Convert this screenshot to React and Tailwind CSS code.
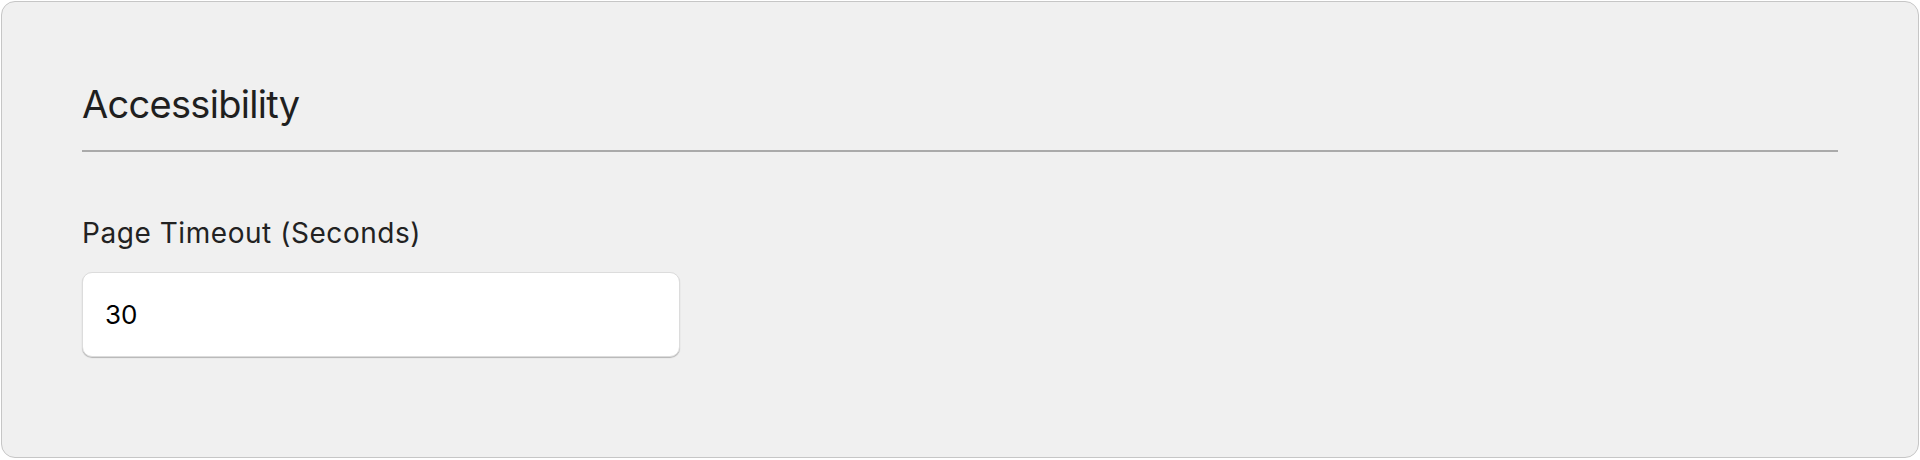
import React from "react";

const App = () => {
  return (
    <div className="w-[1920px] h-[460px] bg-white p-px" style={{ fontFamily: "Inter, 'Liberation Sans', sans-serif" }}>
      {/* CARD */}
      <div className="h-[457px] w-[1918px] rounded-[14px] border-[1.5px] border-[#c6c6c6] bg-[#f0f0f0] px-[80px] pt-[79px]">
        {/* SECTION HEADER */}
        <h2 className="text-[38px] leading-[46px] text-[#1f1f1f] font-normal tracking-[-0.7px]">
          Accessibility
        </h2>
        <div className="mt-[23px] h-[2px] bg-[#aaaaaa]"></div>

        {/* FIELD */}
        <label className="mt-[65px] block text-[28px] leading-[32px] tracking-[0.55px] text-[#222222]">
          Page Timeout (Seconds)
        </label>
        <input
          type="text"
          defaultValue="30"
          className="mt-[23px] block h-[85px] w-[598px] rounded-[10px] border border-[#dcdcdc] bg-white pl-[22px] text-[26px] text-black shadow-[0_1px_1px_rgba(0,0,0,0.25)] outline-none"
        />
      </div>
    </div>
  );
};

export default App;
